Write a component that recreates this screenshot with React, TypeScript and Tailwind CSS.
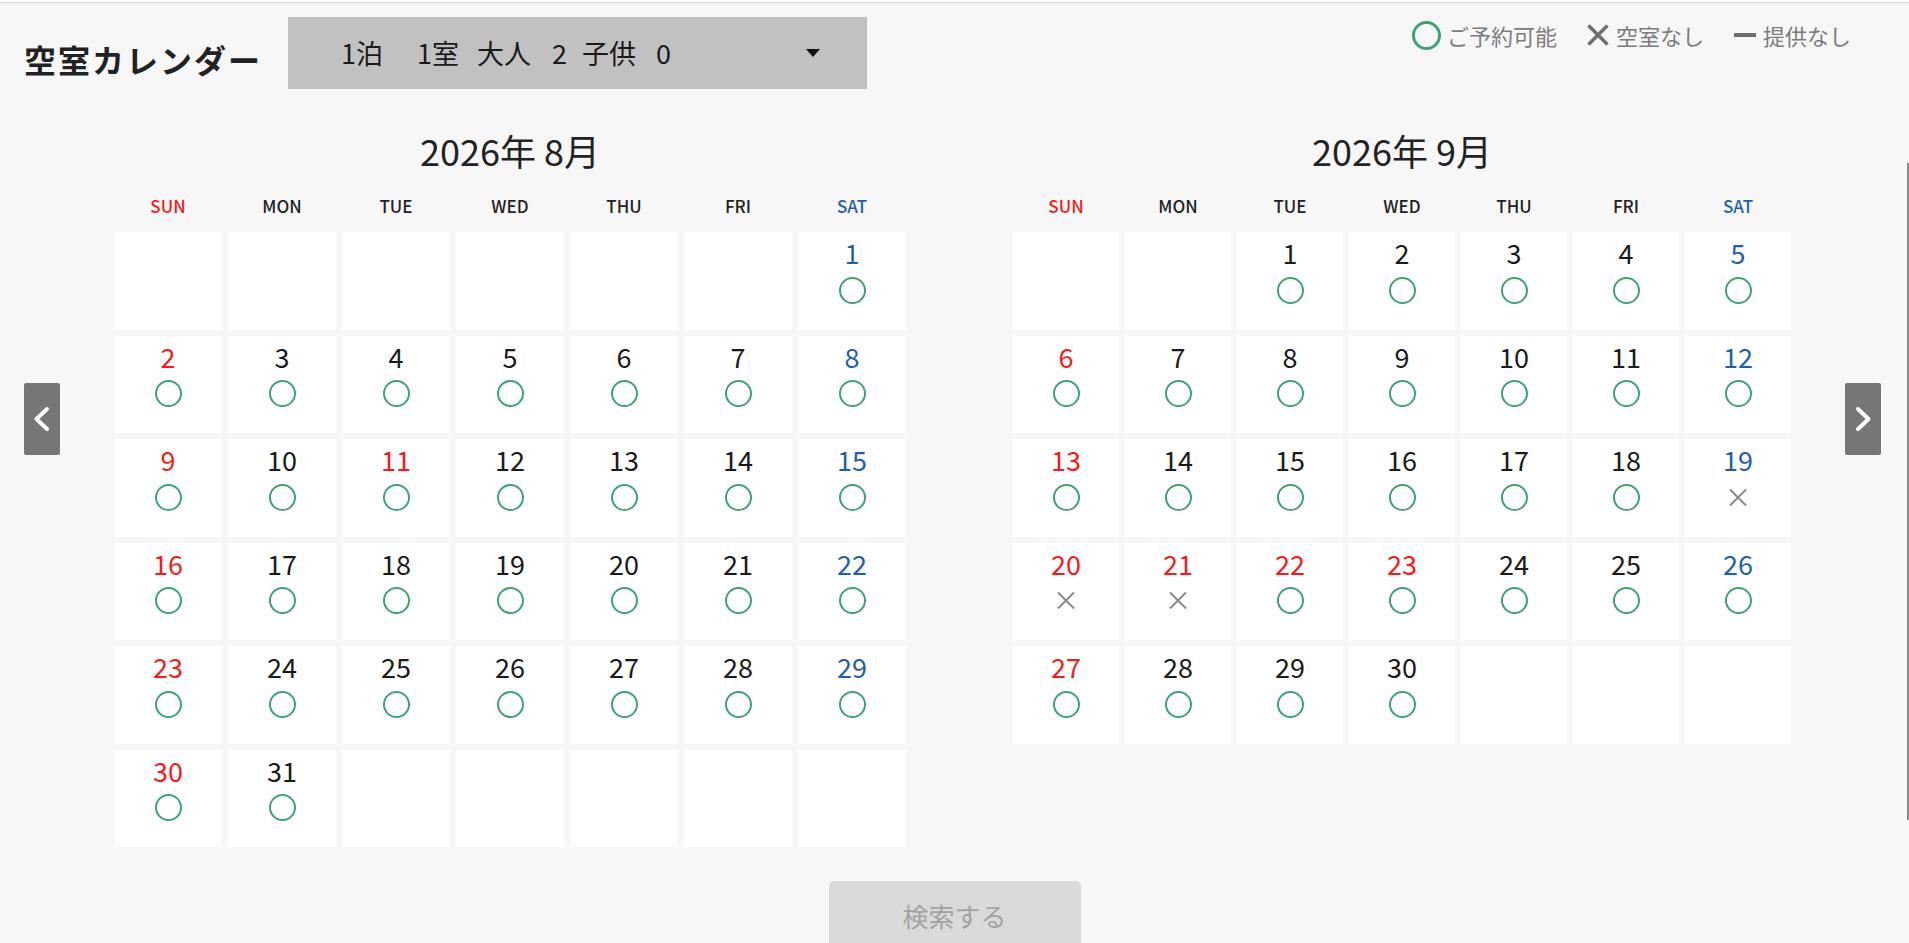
import React from 'react';

type Status = 'ok' | 'full';

type Cell = { d: number; status: Status; holiday: boolean } | null;

type MonthData = {
  title: string;
  cols: string;
  cells: Cell[];
};

const WEEK = ['SUN', 'MON', 'TUE', 'WED', 'THU', 'FRI', 'SAT'];

const buildMonth = (offset: number, days: number, full: number[], holidays: number[]) => {
  const cells: Cell[] = [];
  for (let i = 0; i < offset; i++) cells.push(null);
  for (let d = 1; d <= days; d++) {
    cells.push({ d, status: full.includes(d) ? 'full' : 'ok', holiday: holidays.includes(d) });
  }
  while (cells.length % 7 !== 0) cells.push(null);
  return cells;
};

const months: MonthData[] = [
  {
    title: '2026年 8月',
    cols: 'grid-cols-[repeat(7,108px)]',
    cells: buildMonth(6, 31, [], [11]),
  },
  {
    title: '2026年 9月',
    cols: 'grid-cols-[repeat(7,106px)]',
    cells: buildMonth(2, 30, [19, 20, 21], [21, 22, 23]),
  },
];

const Circle = ({ size }: { size: 'sm' | 'lg' }) => (
  <span
    className={
      size === 'lg'
        ? 'block w-[29px] h-[29px] rounded-full border-[3px] border-[#3ca374]'
        : 'block w-[27px] h-[27px] rounded-full border-[2.5px] border-[#3ca374]'
    }
  />
);

const Cross = () => (
  <svg width="20" height="19" viewBox="0 0 20 19" className="block">
    <path d="M2 1.5 L18 17.5 M18 1.5 L2 17.5" stroke="#8a8a8a" strokeWidth="2" fill="none" />
  </svg>
);

const Chevron = ({ dir }: { dir: 'left' | 'right' }) => (
  <svg width="36" height="72" viewBox="0 0 36 72" className="block">
    <path
      d={dir === 'left' ? 'M23 26 L12.5 36 L23 46' : 'M13 26 L23.5 36 L13 46'}
      stroke="#fff"
      strokeWidth="4"
      strokeLinecap="round"
      strokeLinejoin="round"
      fill="none"
    />
  </svg>
);

const dayColor = (col: number, holiday: boolean) => {
  if (col === 0 || holiday) return 'text-[#f51b1b]';
  if (col === 6) return 'text-[#1f5fae]';
  return 'text-[#1a1a1a]';
};

const headColor = (col: number) => {
  if (col === 0) return 'text-[#f51b1b]';
  if (col === 6) return 'text-[#1f5fae]';
  return 'text-[#222]';
};

const Month = ({ m }: { m: MonthData }) => (
  <div className="flex flex-col">
    <h2 className="mt-[39px] text-center text-[36px] leading-[44px] text-[#222]">{m.title}</h2>
    <div className={`mt-[19px] grid ${m.cols} gap-x-[6px]`}>
      {WEEK.map((w, i) => (
        <div key={w} className={`text-center text-[17px] leading-[30px] font-medium ${headColor(i)}`}>
          {w}
        </div>
      ))}
    </div>
    <div className={`mt-[11px] grid ${m.cols} gap-x-[6px] gap-y-[6px]`}>
      {m.cells.map((c, i) => (
        <div key={i} className="h-[97.5px] bg-white flex flex-col items-center">
          {c && (
            <>
              <span className={`pt-[6px] text-[27px] leading-[30px] ${dayColor(i % 7, c.holiday)}`}>{c.d}</span>
              <div className="mt-[8px] h-[28px] flex items-center justify-center">
                {c.status === 'ok' ? <Circle size="sm" /> : <Cross />}
              </div>
            </>
          )}
        </div>
      ))}
    </div>
  </div>
);

const App = () => {
  return (
    <div className="relative w-full h-[943px] overflow-hidden bg-[#f7f7f7] font-['Noto_Sans_CJK_JP','Noto_Sans',sans-serif]">
      <div className="h-[2px] bg-white" />
      <div className="h-px bg-[#d2d2d2]" />

      <header className="flex items-start pt-[14px] pl-[24px] pr-[58px]">
        <h1 className="mt-[22px] text-[32px] leading-[40px] font-bold tracking-[2px] text-[#222]">空室カレンダー</h1>
        <button className="ml-[26px] w-[579px] h-[72px] bg-[#c1c1c1] flex items-center pl-[53px] pr-[47px] text-[27px] text-[#1a1a1a]">
          <span>1泊</span>
          <span className="ml-[34px]">1室</span>
          <span className="ml-[18px]">大人</span>
          <span className="ml-[21px]">2</span>
          <span className="ml-[15px]">子供</span>
          <span className="ml-[20px]">0</span>
          <svg width="14" height="8" viewBox="0 0 14 8" className="ml-auto">
            <path d="M0 0 H14 L7 8 Z" fill="#111" />
          </svg>
        </button>
        <div className="ml-auto mt-[3px] flex items-center text-[22px] leading-[30px] text-[#7c7c7c]">
          <Circle size="lg" />
          <span className="ml-[6px]">ご予約可能</span>
          <svg width="24" height="24" viewBox="0 0 24 24" className="ml-[29px]">
            <path d="M2.5 2.5 L21.5 21.5 M21.5 2.5 L2.5 21.5" stroke="#6f6f6f" strokeWidth="3.5" fill="none" />
          </svg>
          <span className="ml-[6px]">空室なし</span>
          <span className="ml-[30px] block w-[22px] h-[4px] bg-[#6f6f6f]" />
          <span className="ml-[7px]">提供なし</span>
        </div>
      </header>

      <main className="flex items-start pl-[24px]">
        <button className="mt-[294px] w-[36px] h-[72px] rounded-[2px] bg-[#767676]">
          <Chevron dir="left" />
        </button>
        <div className="ml-[54px]">
          <Month m={months[0]} />
        </div>
        <div className="ml-[107px]">
          <Month m={months[1]} />
        </div>
        <button className="ml-[54px] mt-[294px] w-[36px] h-[72px] rounded-[2px] bg-[#767676]">
          <Chevron dir="right" />
        </button>
      </main>

      <div className="flex justify-center mt-[34px]">
        <button className="w-[252px] h-[68px] rounded-[5px] bg-[#dadada] text-[26px] text-[#a3a3a3]">検索する</button>
      </div>

      <div className="absolute right-0 top-[163px] w-[2px] h-[657px] bg-[#8a8a8a]" />
    </div>
  );
};

export default App;
